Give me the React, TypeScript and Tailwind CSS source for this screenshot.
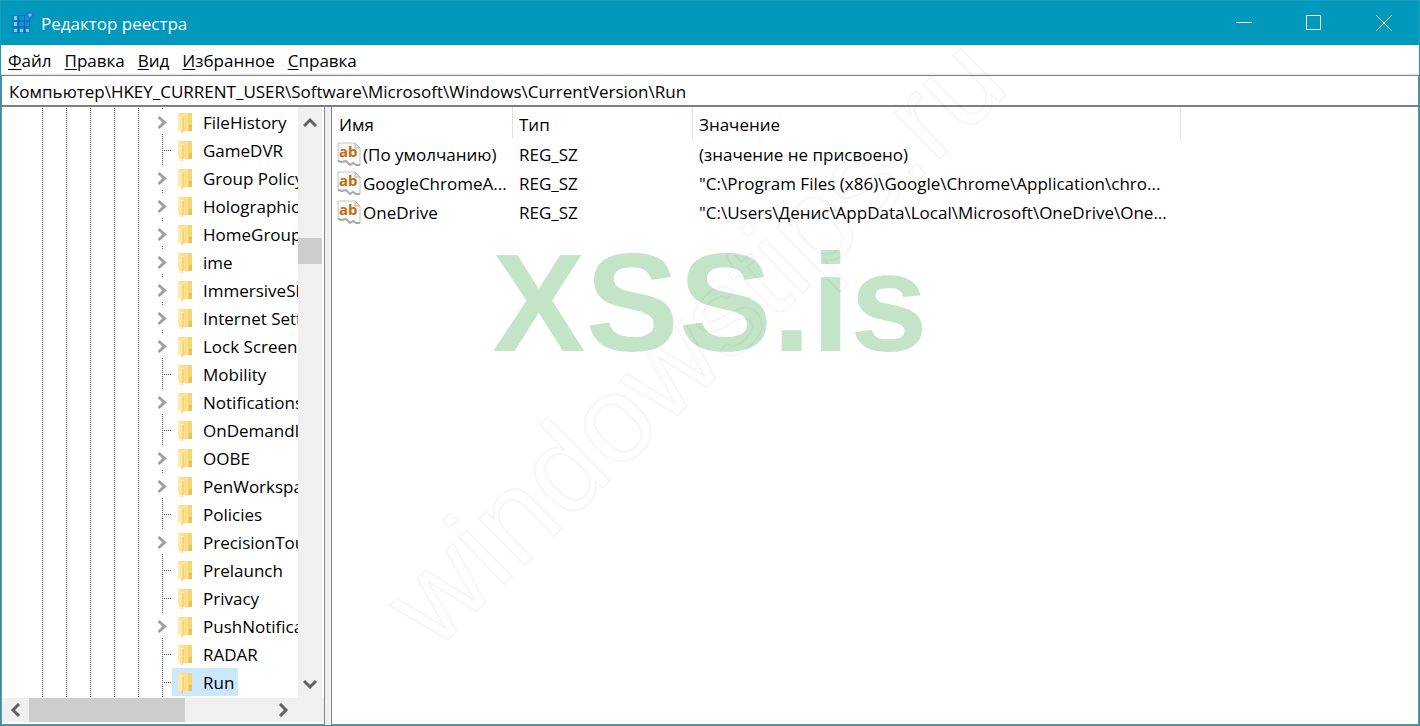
import React from 'react';

interface TreeKey {
  name: string;
  expandable: boolean;
  selected?: boolean;
}

const treeKeys: TreeKey[] = [
  { name: 'FileHistory', expandable: true },
  { name: 'GameDVR', expandable: false },
  { name: 'Group Policy', expandable: true },
  { name: 'Holographic', expandable: true },
  { name: 'HomeGroup', expandable: true },
  { name: 'ime', expandable: true },
  { name: 'ImmersiveShell', expandable: true },
  { name: 'Internet Settings', expandable: true },
  { name: 'Lock Screen', expandable: true },
  { name: 'Mobility', expandable: false },
  { name: 'Notifications', expandable: true },
  { name: 'OnDemandInterfaces', expandable: false },
  { name: 'OOBE', expandable: true },
  { name: 'PenWorkspace', expandable: true },
  { name: 'Policies', expandable: false },
  { name: 'PrecisionTouchPad', expandable: true },
  { name: 'Prelaunch', expandable: false },
  { name: 'Privacy', expandable: false },
  { name: 'PushNotifications', expandable: true },
  { name: 'RADAR', expandable: false },
  { name: 'Run', expandable: false, selected: true },
];

const values = [
  { name: '(По умолчанию)', type: 'REG_SZ', data: '(значение не присвоено)' },
  { name: 'GoogleChromeA...', type: 'REG_SZ', data: '"C:\\Program Files (x86)\\Google\\Chrome\\Application\\chro...' },
  { name: 'OneDrive', type: 'REG_SZ', data: '"C:\\Users\\Денис\\AppData\\Local\\Microsoft\\OneDrive\\One...' },
];

const menuItems = ['Файл', 'Правка', 'Вид', 'Избранное', 'Справка'];

const RegistryIcon = () => (
  <svg width="24" height="24" viewBox="0 0 24 24" aria-hidden="true">
    <path d="M1 4h12v6h6v12H1z" fill="#0a86c6" />
    <path d="M7.500 4v18M13.500 4v18M1 10h18M1 16h18M7 4.500h11.500V16" fill="none" stroke="#0a66b4" />
    <g fill="#7fd0ff">
      <path d="M3 5h3v4H3zM3 11h3v4H3zM3 18h3v3H3zM9 18h3v3H9zM15 18h3v3h-3z" />
    </g>
    <g fill="#0f97cf">
      <path d="M8 5h5v4H8zM14 5h4v4h-4zM8 11h5v4H8zM14 11h4v4h-4z" />
    </g>
    <path d="M19 0l5 4-5 5-5-5z" fill="#1b7cc8" />
    <path d="M19 2l2 2-2 2-2-2z" fill="#74c8fa" />
  </svg>
);

const FolderIcon = () => (
  <svg width="15" height="22" viewBox="0 0 15 22" aria-hidden="true">
    <path d="M1 1h13v18H1z" fill="#fadf8c" />
    <path d="M10 1h4v12l-4 4z" fill="#f6d477" />
    <path d="M11 13h3v6h-4z" fill="#eec25b" />
    <path d="M0 1l5 3v15l-1 2-4-3z" fill="#ffe9a4" />
    <path d="M5 5v13l-1 3" fill="none" stroke="#ecc45f" />
  </svg>
);

const StringIcon = () => (
  <svg width="24" height="24" viewBox="0 0 24 24" className="mb-[2px] shrink-0" aria-hidden="true">
    <path d="M1 1h17l5 5v17h-4l-3-2-3 2-4-4-4 1-4-1z" fill="#fafafa" stroke="#c4c4c4" />
    <path d="M1 19l4 1 4-1 4 4 3-2 3 2h4" fill="none" stroke="#a8a8a8" strokeWidth="2" />
    <path d="M18 1v5h5z" fill="#e2e2e2" stroke="#b8b8b8" />
    <text x="2" y="15" fontSize="15" fontWeight="700" fill="#c66a0c" fontFamily="Open Sans, sans-serif">ab</text>
  </svg>
);

// Guide lines of the parent levels plus the key's own expander or stub
const Branch = ({ expandable }: { expandable?: boolean }) => (
  <svg width="170" height="28" viewBox="0 0 170 28" className="shrink-0" aria-hidden="true">
    <path
      d="M40.500 0v28M64.500 0v28M88.500 0v28M112.500 0v28M136.500 0v28"
      stroke="#5f5f5f"
      strokeDasharray="1 1"
    />
    {expandable ? (
      <>
        <path d="M160.500 0v2M160.500 26v2" stroke="#5f5f5f" strokeDasharray="1 1" />
        <path d="M156.500 9l6 5.500-6 5.500" fill="none" stroke="#a0a0a0" strokeWidth="3" />
      </>
    ) : (
      <path d="M160.500 0v28M162 14.500h8" stroke="#5f5f5f" strokeDasharray="1 1" />
    )}
  </svg>
);

const Arrow = ({ d }: { d: string }) => (
  <svg width="14" height="14" viewBox="0 0 14 14" aria-hidden="true">
    <path d={d} fill="none" stroke="#606060" strokeWidth="3" />
  </svg>
);

const TitleBar = () => (
  <header className="flex h-11 shrink-0 items-center bg-[#0099bc] pl-[10px] text-white">
    <RegistryIcon />
    <h1 className="ml-[6px] flex-1 pt-[2px]">Редактор реестра</h1>
    <button aria-label="Свернуть" className="flex h-full w-[70px] items-center justify-center">
      <svg width="16" height="16" viewBox="0 0 16 16"><path d="M0 7.500h16" stroke="#fff" /></svg>
    </button>
    <button aria-label="Развернуть" className="flex h-full w-[70px] items-center justify-center">
      <svg width="16" height="16" viewBox="0 0 16 16"><path d="M.5.5h14v14H.5z" fill="none" stroke="#fff" /></svg>
    </button>
    <button aria-label="Закрыть" className="flex h-full w-[70px] items-center justify-center">
      <svg width="16" height="16" viewBox="0 0 16 16"><path d="M.5.5l15 15M15.500.5l-15 15" stroke="#fff" /></svg>
    </button>
  </header>
);

const KeyTree = () => (
  <nav className="flex w-[324px] shrink-0 flex-col border-x border-b border-[#828790] bg-white">
    <div className="flex min-h-0 flex-1">
      <ul className="w-[296px] overflow-hidden pt-px">
        {treeKeys.map((key) => (
          <li key={key.name} className="flex h-7">
            <Branch expandable={key.expandable} />
            <button
              className={
                key.selected
                  ? 'flex shrink-0 items-center gap-[10px] bg-[#cce8ff] pt-[2px] pr-1 pl-[6px] whitespace-nowrap'
                  : 'flex shrink-0 items-center gap-[10px] pt-[2px] pr-1 pl-[6px] whitespace-nowrap'
              }
            >
              <FolderIcon />
              {key.name}
            </button>
          </li>
        ))}
        <li className="flex h-7" aria-hidden="true">
          <Branch />
        </li>
      </ul>
      {/* Vertical scrollbar */}
      <div className="flex w-6 flex-col items-center bg-[#f0f0f0]">
        <button aria-label="Вверх" className="flex h-8 items-center justify-center">
          <Arrow d="M1 10l6-6 6 6" />
        </button>
        <div className="flex w-full flex-1 flex-col">
          <div className="mt-[99px] h-[26px] bg-[#cdcdcd]" />
        </div>
        <button aria-label="Вниз" className="flex h-7 items-center justify-center">
          <Arrow d="M1 4l6 6 6-6" />
        </button>
      </div>
    </div>
    {/* Horizontal scrollbar */}
    <div className="mb-[2px] flex h-6 shrink-0 items-center bg-[#f0f0f0] pr-[27px]">
      <button aria-label="Влево" className="flex h-full w-[27px] items-center justify-center">
        <Arrow d="M10 1L4 7l6 6" />
      </button>
      <div className="h-full flex-1">
        <div className="h-full w-[156px] bg-[#cdcdcd]" />
      </div>
      <button aria-label="Вправо" className="flex h-full w-7 items-center justify-center">
        <Arrow d="M4 1l6 6-6 6" />
      </button>
    </div>
  </nav>
);

const ValueList = () => (
  <main className="min-w-0 flex-1 overflow-hidden border-x border-b border-[#828790] bg-white">
    <table className="w-[849px] table-fixed border-separate border-spacing-0 text-left whitespace-nowrap">
      <thead>
        <tr className="h-8">
          <th className="w-[181px] border-r border-[#e3e3dc] p-0 pt-1 pl-[7px] font-normal">Имя</th>
          <th className="w-[180px] border-r border-[#e3e3dc] p-0 pt-1 pl-[6px] font-normal">Тип</th>
          <th className="border-r border-[#e3e3dc] p-0 pt-1 pl-[6px] font-normal">Значение</th>
        </tr>
      </thead>
      <tbody>
        {values.map((value) => (
          <tr key={value.name} className="h-[29px]">
            <td className="p-0 pt-[2px] pl-[5px]">
              <div className="flex items-center gap-[2px]">
                <StringIcon />
                {value.name}
              </div>
            </td>
            <td className="p-0 pt-[2px] pl-[6px]">{value.type}</td>
            <td className="p-0 pt-[2px] pl-[6px]">{value.data}</td>
          </tr>
        ))}
      </tbody>
    </table>
  </main>
);

const Watermarks = () => (
  <div className="pointer-events-none absolute inset-0 flex justify-center overflow-hidden">
    <p className="mt-[222px] font-['Liberation_Sans',sans-serif] text-[140px] leading-[160px] font-bold text-[#c3e4c7]">
      XSS.is
    </p>
    <svg width="1420" height="726" viewBox="0 0 1420 726" className="absolute top-0 left-0">
      <text
        transform="translate(434 651) rotate(-44.3)"
        fontFamily="Liberation Sans, sans-serif"
        fontSize="123"
        fill="none"
        stroke="#000"
        strokeOpacity="0.035"
        strokeWidth="2"
      >
        windowstips.ru
      </text>
    </svg>
  </div>
);

const App: React.FC = () => {
  return (
    <div className="relative flex h-screen flex-col overflow-hidden border border-[#1a9dbd] bg-[#f0f0f0] font-['Open_Sans',sans-serif] text-[17px] leading-6 text-black">
      <TitleBar />

      <div className="mb-[2px] flex h-7 shrink-0 items-center gap-[13px] bg-white pt-1 pl-[7px]">
        {menuItems.map((item) => (
          <button key={item}>
            <span className="underline decoration-1 underline-offset-2">{item[0]}</span>
            {item.slice(1)}
          </button>
        ))}
      </div>

      <input
        type="text"
        aria-label="Адрес"
        defaultValue="Компьютер\HKEY_CURRENT_USER\Software\Microsoft\Windows\CurrentVersion\Run"
        className="h-8 w-full shrink-0 border border-b-2 border-[#7d7d86] bg-white px-[7px] pt-[2px] outline-none"
      />

      <div className="flex min-h-0 flex-1">
        <KeyTree />
        <div className="w-[6px] shrink-0 bg-[#f0f0f0]" />
        <ValueList />
      </div>

      <Watermarks />
    </div>
  );
};

export default App;
